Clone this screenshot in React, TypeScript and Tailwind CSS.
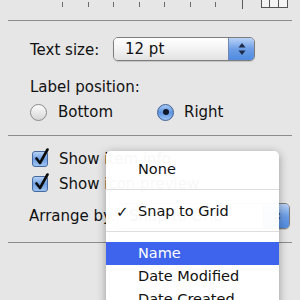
import React from "react"

const font = { fontFamily: '"DejaVu Sans", "Liberation Sans", sans-serif' }

const Arrows: React.FC = () => (
    <svg width="8" height="14" viewBox="0 0 8 14">
        <path d="M4 1 L7.5 5.5 H0.5 Z" fill="#1f2a44" />
        <path d="M4 13 L7.5 8.5 H0.5 Z" fill="#1f2a44" />
    </svg>
)

const Popup: React.FC<{ label?: string; className?: string }> = ({ label, className }) => (
    <div className={`flex h-[24px] rounded-[5px] border border-[#7d7d7d] overflow-hidden shadow-[0_1px_1px_rgba(0,0,0,0.15)] ${className ?? ""}`}>
        <div className="flex-1 flex items-center pl-[11px] bg-gradient-to-b from-white via-[#f3f3f3] to-[#e2e2e2] text-[#111]">
            {label}
        </div>
        <div className="w-[26px] flex items-center justify-center border-l border-[#6f86b0] bg-gradient-to-b from-[#b9d3f6] via-[#6d9ee6] to-[#4f8be0]">
            <Arrows />
        </div>
    </div>
)

const Radio: React.FC<{ on?: boolean }> = ({ on }) => (
    <div className={`w-[17px] h-[17px] rounded-full border flex items-center justify-center ${on ? "border-[#3f5f91] bg-gradient-to-b from-[#a9c9f3] via-[#5d93e0] to-[#9cc3f2]" : "border-[#8a8a8a] bg-gradient-to-b from-[#fdfdfd] to-[#d6d6d6]"}`}>
        {on && <div className="w-[6px] h-[6px] rounded-full bg-[#111827]" />}
    </div>
)

const Check: React.FC = () => (
    <div className="w-[16px] h-[16px] rounded-[3px] border border-[#466aa0] bg-gradient-to-b from-[#b6d2f5] via-[#6f9fe4] to-[#9cc2f0] relative">
        <svg className="absolute -top-[4px] left-[1px]" width="16" height="18" viewBox="0 0 16 18">
            <path d="M2.5 10.5 L6 15 L13.5 1.5" stroke="#0c0c0c" strokeWidth="2.6" fill="none" strokeLinecap="round" strokeLinejoin="round" />
        </svg>
    </div>
)

const Line: React.FC = () => <div className="mx-[8px] h-px bg-[#8c8c8c]" />

const App: React.FC = () => {
    const ticks = [62, 87, 113, 138, 164, 190, 215]
    return (
        <div className="relative w-[300px] h-[300px] overflow-hidden bg-[#e6e6e6] text-[15px] text-[#111]" style={font}>
            {/* ruler */}
            <div className="flex h-[20px] items-start">
                <div className="flex h-[8px] pt-[2px]">
                    {ticks.map((x, i) => (
                        <div key={x} className="w-px h-[5px] bg-[#6a6a6a]" style={{ marginLeft: i === 0 ? x : 24.5 }} />
                    ))}
                    <div className="w-px h-[9px] -mt-[2px] bg-[#5a5a5a] ml-[26px]" />
                </div>
                <div className="ml-[18px] flex h-[8px] border-b border-x border-[#555]">
                    <div className="w-[8px] border-r border-[#555] bg-[#f4f4f4]" />
                    <div className="w-[9px] border-r border-[#555] bg-[#f4f4f4]" />
                    <div className="w-[8px] bg-[#f4f4f4]" />
                </div>
            </div>
            <Line />

            <div className="pl-[30px] pr-[45px]">
                <div className="flex items-center mt-[16px] h-[24px]">
                    <span className="w-[83px] pt-[2px]">Text size:</span>
                    <Popup label="12 pt" className="flex-1" />
                </div>
                <div className="mt-[15px] h-[22px] flex items-center">Label position:</div>
                <div className="mt-[3px] h-[22px] flex items-center">
                    <Radio />
                    <span className="ml-[11px] w-[99px]">Bottom</span>
                    <Radio on />
                    <span className="ml-[10px]">Right</span>
                </div>
            </div>

            <div className="mt-[12px]">
                <Line />
            </div>

            <div className="pl-[32px]">
                <div className="mt-[12px] h-[22px] flex items-center">
                    <Check />
                    <span className="ml-[11px]">Show item info</span>
                </div>
                <div className="mt-[3px] h-[22px] flex items-center">
                    <Check />
                    <span className="ml-[11px]">Show icon preview</span>
                </div>
            </div>
            <div className="pl-[29px] pr-[10px] mt-[8px] h-[26px] flex items-center">
                <span className="w-[88px]">Arrange by:</span>
                <Popup label="Snap to Grid" className="flex-1 h-[26px]" />
            </div>
            <div className="mt-[13px]">
                <Line />
            </div>

            {/* open menu */}
            <div className="absolute left-[106px] top-[151px] w-[173px] h-[170px] rounded-t-[5px] bg-white/[0.97] shadow-[0_2px_10px_rgba(0,0,0,0.35)] pt-[8px] text-[14.5px]">
                <div className="h-[22px] flex items-center pl-[32px]">None</div>
                <div className="mt-[8px] mb-[11px] h-px bg-[#dedede]" />
                <div className="h-[22px] flex items-center">
                    <span className="w-[32px] pl-[10px] text-[15px]">✓</span>
                    Snap to Grid
                </div>
                <div className="mt-[8px] mb-[10px] h-px bg-[#dedede]" />
                <div className="h-[23px] flex items-center pl-[32px] bg-[#3e64ee] text-white">Name</div>
                <div className="h-[23px] flex items-center pl-[32px]">Date Modified</div>
                <div className="h-[23px] flex items-center pl-[32px]">Date Created</div>
            </div>
        </div>
    )
}

export default App
